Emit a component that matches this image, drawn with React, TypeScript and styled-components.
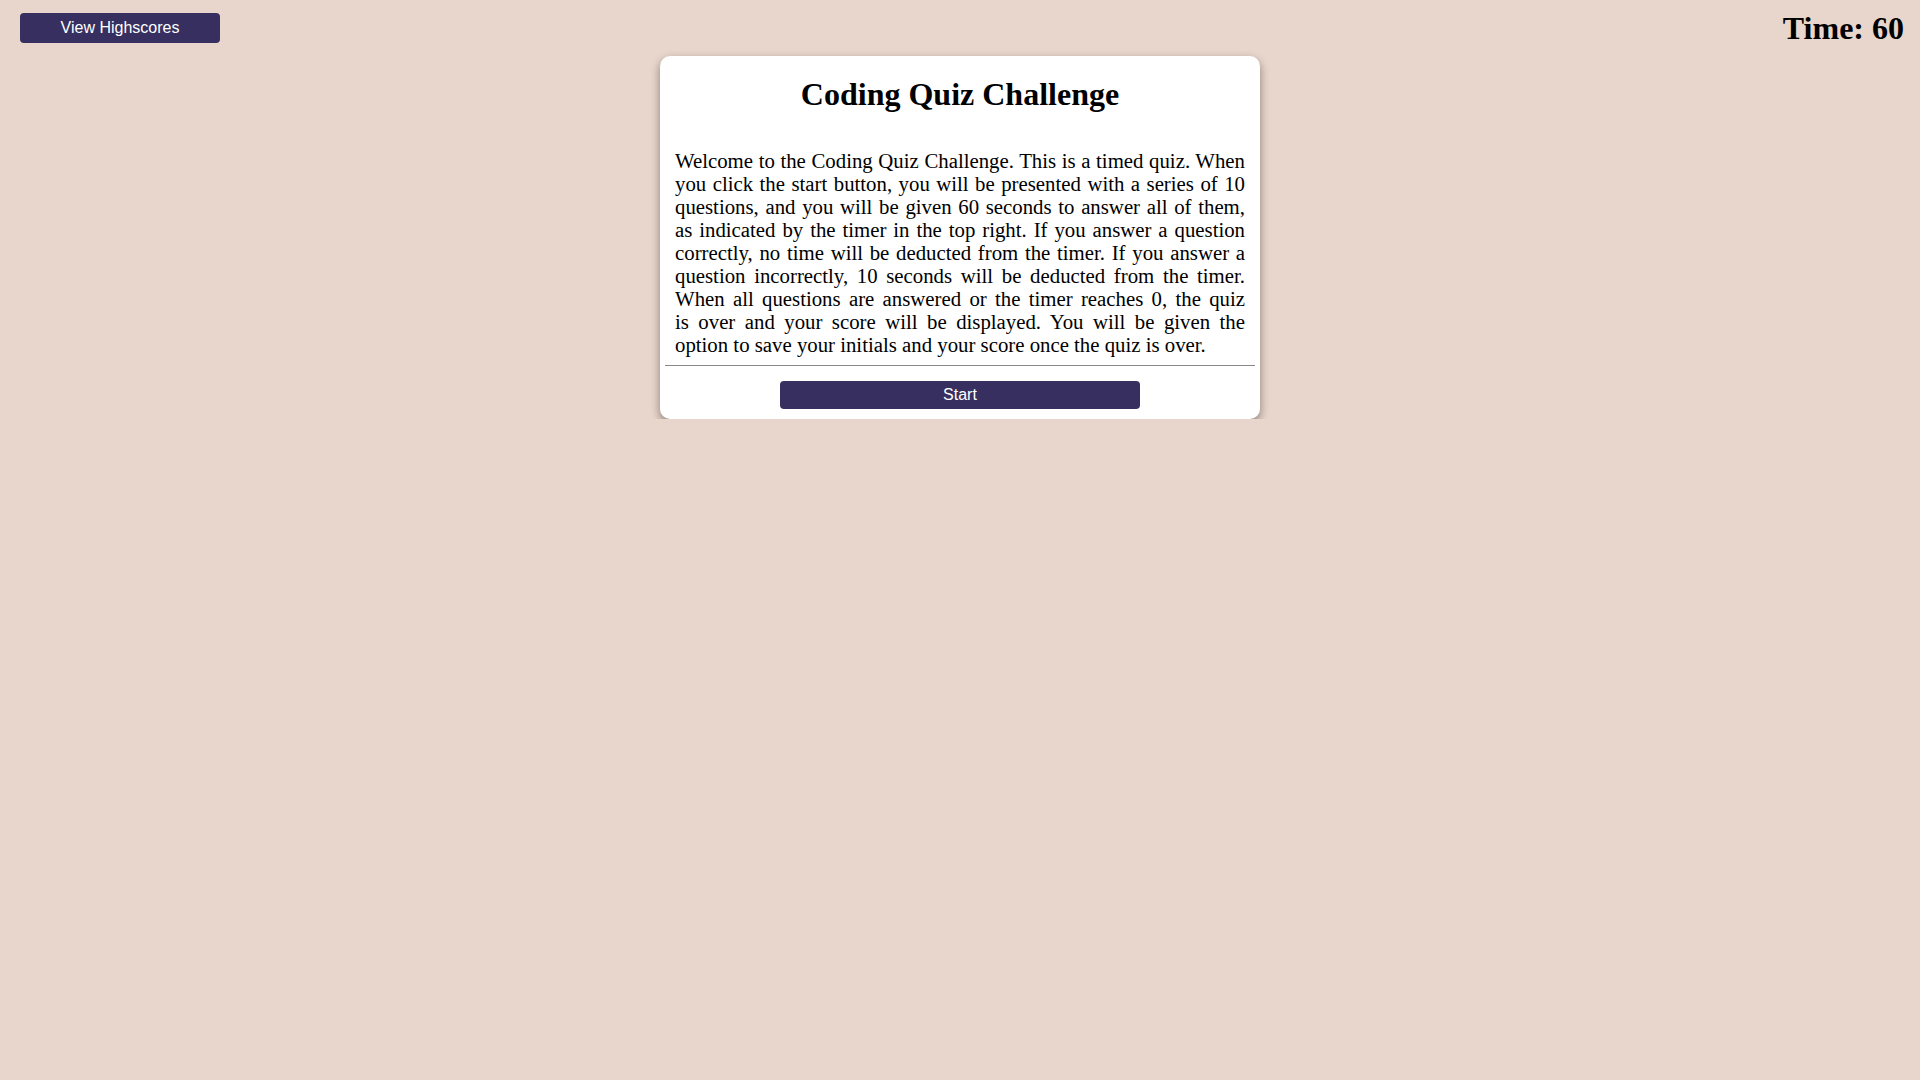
import React from "react";
import styled, { createGlobalStyle } from "styled-components";

const GlobalStyle = createGlobalStyle`
  html, body {
    margin: 0;
    padding: 0;
    background: #e8d5cb;
  }
  body {
    font-family: "Liberation Serif", "Times New Roman", serif;
    color: #000;
  }
`;

const Header = styled.header`
  display: flex;
  justify-content: space-between;
  align-items: flex-start;
  height: 46px;
  padding: 10px 16px 0 20px;
  box-sizing: border-box;
`;

const Button = styled.button<{ $wide?: boolean; $top?: number }>`
  display: block;
  width: ${(p) => (p.$wide ? "360px" : "200px")};
  height: ${(p) => (p.$wide ? "28px" : "30px")};
  margin-top: ${(p) => p.$top ?? 0}px;
  padding: 0;
  border: none;
  border-radius: 4px;
  background: #362f5f;
  color: #fff;
  font-family: "Liberation Sans", Arial, sans-serif;
  font-size: 16px;
  cursor: pointer;
`;

const Timer = styled.h2`
  margin: 0;
  font-size: 32px;
  font-weight: bold;
  line-height: normal;
`;

const Card = styled.main`
  width: 600px;
  box-sizing: border-box;
  margin: 10px auto 0;
  padding: 5px 5px 10px;
  background: #fff;
  border-radius: 10px;
  box-shadow: 0 4px 10px rgba(0, 0, 0, 0.4);
  display: flex;
  flex-direction: column;
  align-items: center;
`;

const Title = styled.h1`
  margin: 15px 0 0;
  font-size: 32px;
  font-weight: bold;
  line-height: normal;
  text-align: center;
`;

const Text = styled.p`
  margin: 36px 0 0;
  padding: 0 10px;
  font-size: 20.8px;
  line-height: 23px;
  box-sizing: border-box;
  width: 100%;
`;

const Line = styled.span<{ $last?: boolean }>`
  display: block;
  white-space: nowrap;
  text-align: justify;
  text-align-last: ${(p) => (p.$last ? "left" : "justify")};
`;

const Rule = styled.hr`
  width: 100%;
  margin: 9px 0 15px;
  border: none;
  border-top: 1px solid #888;
`;

const lines = [
  "Welcome to the Coding Quiz Challenge. This is a timed quiz. When",
  "you click the start button, you will be presented with a series of 10",
  "questions, and you will be given 60 seconds to answer all of them,",
  "as indicated by the timer in the top right. If you answer a question",
  "correctly, no time will be deducted from the timer. If you answer a",
  "question incorrectly, 10 seconds will be deducted from the timer.",
  "When all questions are answered or the timer reaches 0, the quiz",
  "is over and your score will be displayed. You will be given the",
  "option to save your initials and your score once the quiz is over.",
];

export default function App() {
  return (
    <>
      <GlobalStyle />
      <Header>
        <Button $top={3}>View Highscores</Button>
        <Timer>Time: 60</Timer>
      </Header>
      <Card>
        <Title>Coding Quiz Challenge</Title>
        <Text>
          {lines.map((l, i) => (
            <Line key={i} $last={i === lines.length - 1}>
              {l}
            </Line>
          ))}
        </Text>
        <Rule />
        <Button $wide>Start</Button>
      </Card>
    </>
  );
}
